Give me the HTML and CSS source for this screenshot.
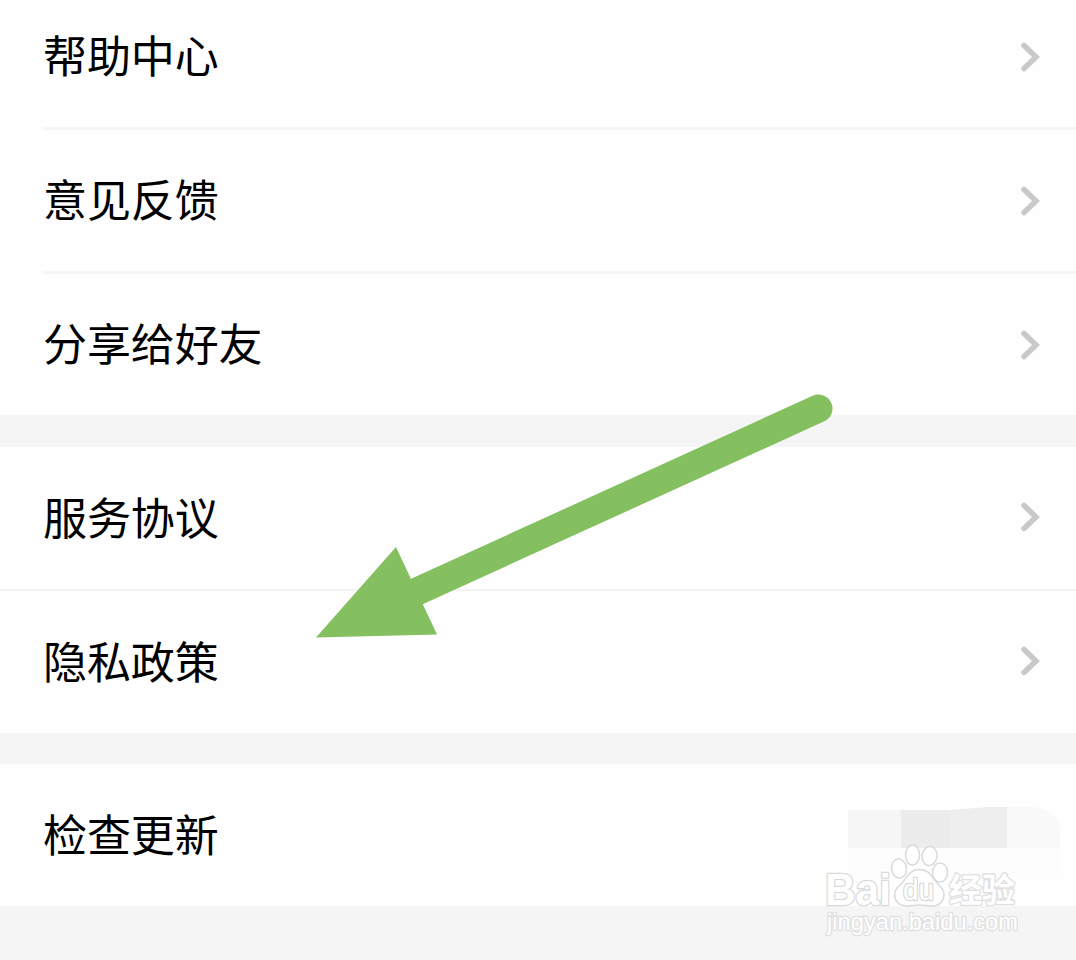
FILE: index.html
```html
<!DOCTYPE html>
<html lang="zh-CN">
<head>
  <meta charset="utf-8">
  <meta name="viewport" content="width=device-width,initial-scale=1.0">
  <title>设置</title>
  <link rel="stylesheet" href="styles.css">
</head>
<body>
  <div class="page">
    <ul class="group">
      <li class="row inset">
        <span>帮助中心</span>
        <svg class="chevron" viewBox="0 0 20 30"><path d="M4 3.500 L16 15 L4 26.500"/></svg>
      </li>
      <li class="row inset">
        <span>意见反馈</span>
        <svg class="chevron" viewBox="0 0 20 30"><path d="M4 3.500 L16 15 L4 26.500"/></svg>
      </li>
      <li class="row">
        <span>分享给好友</span>
        <svg class="chevron" viewBox="0 0 20 30"><path d="M4 3.500 L16 15 L4 26.500"/></svg>
      </li>
    </ul>
    <ul class="group agreements">
      <li class="row line">
        <span>服务协议</span>
        <svg class="chevron" viewBox="0 0 20 30"><path d="M4 3.500 L16 15 L4 26.500"/></svg>
      </li>
      <li class="row">
        <span>隐私政策</span>
        <svg class="chevron" viewBox="0 0 20 30"><path d="M4 3.500 L16 15 L4 26.500"/></svg>
      </li>
    </ul>
    <ul class="group">
      <li class="row">
        <span>检查更新</span>
      </li>
    </ul>

    <svg class="arrow" viewBox="0 0 520 246">
      <path class="shaft" d="M104 197 L504.500 14.500"/>
      <path class="head" d="M2 243.500 L82 153 L123 240.500 Z"/>
    </svg>

    <!-- version number, masked -->
    <svg class="mask" viewBox="0 0 214 72">
      <path fill="#fbfbfb" d="M0 40 H212 V72 H0 Z" opacity=".5"/>
      <path fill="#f6f6f6" d="M0 4 H53 V42 H0 Z"/>
      <path fill="#ececec" d="M53 4 H102 V42 H53 Z"/>
      <path fill="#eeeeee" d="M102 4 L140 1 H159 V42 H102 Z"/>
      <path fill="#f9f9f9" d="M159 1 H188 Q211 6 212 25 V42 H159 Z"/>
    </svg>

    <svg class="watermark" viewBox="0 0 200 100">
      <g class="outline">
        <text class="latin" x="1" y="65" textLength="66" lengthAdjust="spacingAndGlyphs">Bai</text>
        <ellipse cx="75" cy="28.500" rx="7.500" ry="9.500" transform="rotate(-8 75 28.500)"/>
        <ellipse cx="88.500" cy="15" rx="7" ry="10"/>
        <ellipse cx="105.500" cy="16" rx="7.500" ry="9.500" transform="rotate(8 105.500 16)"/>
        <ellipse cx="116" cy="32.500" rx="7.500" ry="9.500"/>
        <path d="M95 29.500 C107 29.500 108 39 115 45 C124 53 120 66 108 66 C103 66 100 65 95 65 C90 65 87 66 82 66 C69 65 68 52 75 46 C82 41 84 29.500 95 29.500 Z"/>
        <text class="du" x="79" y="59.500" textLength="31" lengthAdjust="spacingAndGlyphs">du</text>
        <text class="cn" x="125" y="62" textLength="66" lengthAdjust="spacingAndGlyphs">经验</text>
        <text class="url" x="3" y="90" textLength="191" lengthAdjust="spacingAndGlyphs">jingyan.baidu.com</text>
      </g>
    </svg>
  </div>
</body>
</html>
```

FILE: styles.css
```css
body {
  margin: 0;
  background: #f5f5f5;
  color: #000;
  font-family: "Noto Sans CJK SC", sans-serif;
}

.page {
  position: relative;
  height: 960px;
  overflow: hidden;
  display: flex;
  flex-direction: column;
}

.group {
  list-style: none;
  margin: 0 0 31px;
  padding: 0;
  background: #fefefe;
}
/* the list is scrolled a little */
.group:first-child {
  margin-top: -14px;
  margin-bottom: 32px;
}

.row {
  box-sizing: border-box;
  display: flex;
  align-items: center;
  justify-content: space-between;
  height: 142px;
  padding: 0 36px 0 43px;
  font-size: 44px;
  line-height: 64px;
}
.row span {
  padding-bottom: 5px;
  letter-spacing: -0.1px;
}
.group:first-child .row {
  height: 141px;
}
.group:first-child .inset {
  height: 144px;
  margin-left: 43px;
  padding-left: 0;
  border-bottom: 3px solid #f6f6f6;
}
.group .line {
  height: 144px;
  border-bottom: 2px solid #f3f3f3;
}

.chevron {
  width: 20px;
  height: 30px;
  fill: none;
  stroke: #c9c9c9;
  stroke-width: 5.5;
  stroke-linecap: round;
}
.agreements .chevron {
  margin-bottom: 2px;
}

.arrow {
  position: absolute;
  left: 314px;
  top: 394px;
  width: 520px;
  height: 246px;
}
.shaft {
  stroke: #84bf60;
  stroke-width: 28;
  stroke-linecap: round;
}
.head {
  fill: #84bf60;
}

.mask {
  position: absolute;
  left: 848px;
  top: 806px;
  width: 214px;
  height: 72px;
}

.watermark {
  position: absolute;
  left: 824px;
  top: 840px;
  width: 200px;
  height: 100px;
}
.outline {
  fill: #fff;
  stroke: #dadada;
  stroke-width: 1.5;
}
.watermark text {
  paint-order: stroke;
  stroke-width: 2.6;
  stroke-linejoin: round;
}
.latin {
  font: bold 44px "Liberation Sans", sans-serif;
}
.du {
  font: 29px "Liberation Sans", sans-serif;
}
.watermark .cn {
  font: bold 33px "Noto Sans CJK SC", sans-serif;
  stroke: #dfdfdf;
}
.watermark .url {
  font: 24px "Liberation Sans", sans-serif;
  stroke: #e0e0e0;
}
```
